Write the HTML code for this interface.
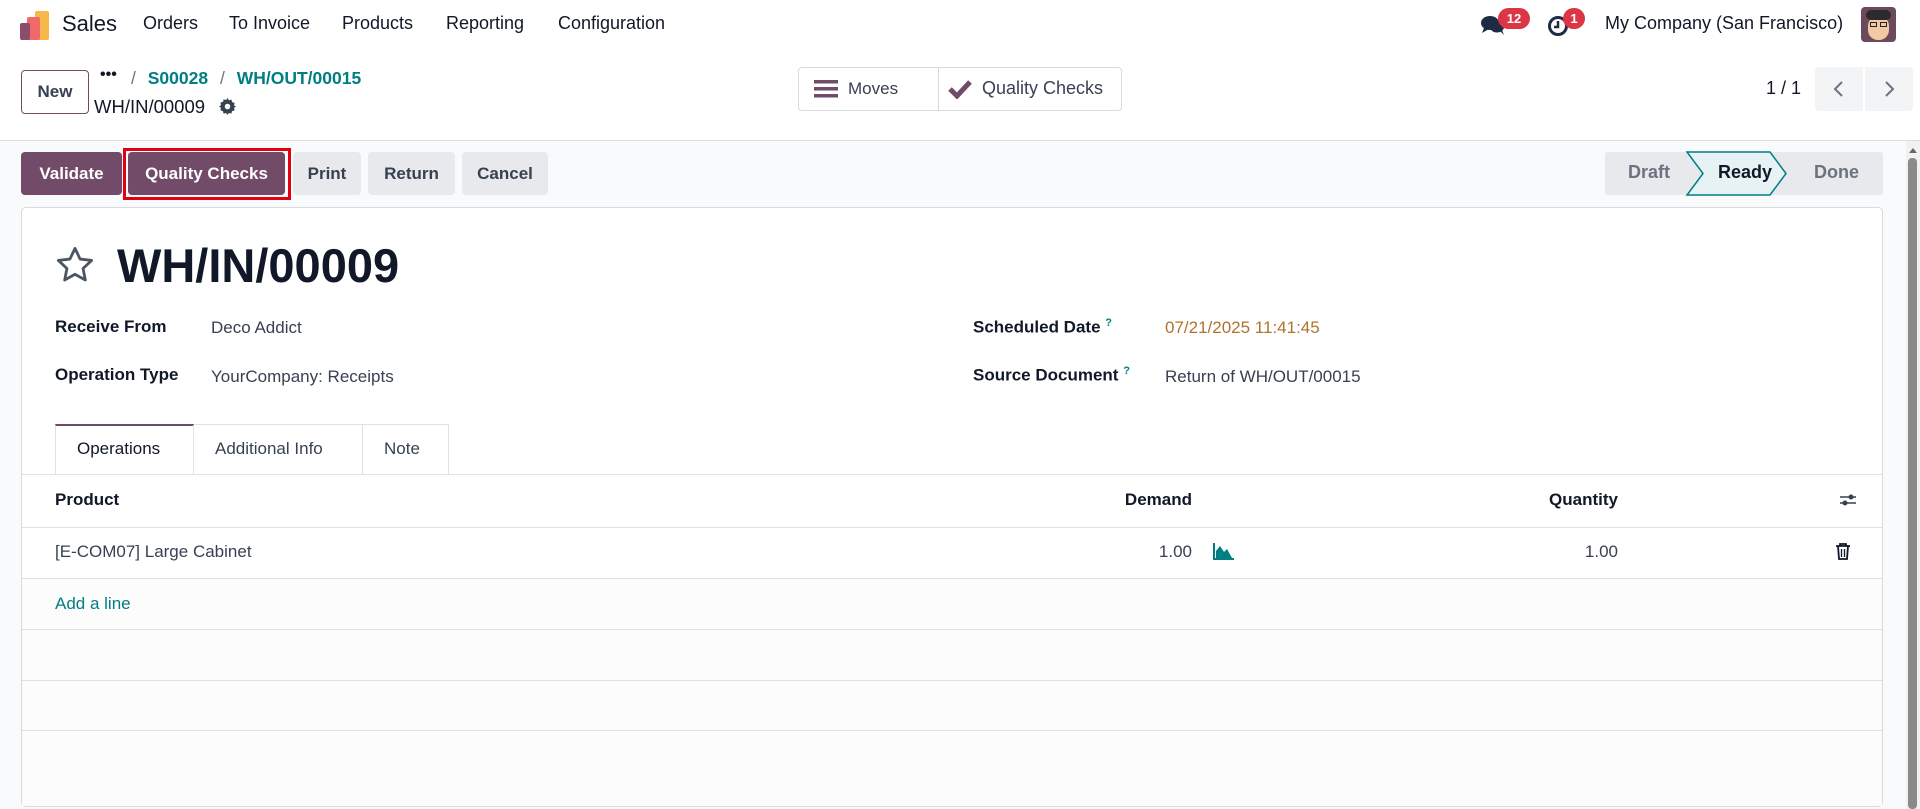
<!DOCTYPE html>
<html><head><meta charset="utf-8"><style>
*{box-sizing:border-box;margin:0;padding:0}
body{width:1920px;height:809px;overflow:hidden;background:#f9fafb;font-family:"Liberation Sans",sans-serif;color:#374151;font-size:17px;position:relative}
.a{position:absolute;white-space:nowrap}
.top{position:absolute;left:0;top:0;width:1920px;height:141px;background:#fff;border-bottom:1px solid #d8dadd}
.nav{font-size:18px;color:#111827;top:13px}
.btn{position:absolute;height:43px;border-radius:4px;font-weight:bold;font-size:17px;display:flex;align-items:center;justify-content:center}
.sec{background:#e7e9ed;color:#374151}
.pri{background:#714b67;color:#fff}
.teal{color:#017e84}
.lbl{font-weight:bold;color:#111827}
.hl{position:absolute;left:22px;width:1860px;height:1px;background:#dee2e6}
</style></head><body>
<div class="top"></div>
<div class="a" style="left:35px;top:11px;width:14px;height:29px;background:#f7b84b;border-radius:2px"></div>
<div class="a" style="left:27px;top:17px;width:13px;height:23px;background:#f06a6a;border-radius:2px"></div>
<div class="a" style="left:20px;top:23px;width:10px;height:17px;background:#8b4d6c;border-radius:2px"></div>
<div class="a nav" style="left:62px;top:11px;font-size:22px">Sales</div>
<div class="a nav" style="left:143px">Orders</div>
<div class="a nav" style="left:229px">To Invoice</div>
<div class="a nav" style="left:342px">Products</div>
<div class="a nav" style="left:446px">Reporting</div>
<div class="a nav" style="left:558px">Configuration</div>
<svg class="a" style="left:1480px;top:14px" width="26" height="22" viewBox="0 0 26 22"><ellipse cx="10" cy="9" rx="9" ry="7" fill="#1f2a44"/><path d="M4 14 L2 19 L9 15Z" fill="#1f2a44"/><ellipse cx="17" cy="13" rx="7" ry="5.5" fill="#1f2a44"/><path d="M20 17 L24 21 L22 16Z" fill="#1f2a44"/></svg>
<div class="a" style="left:1498px;top:8px;width:32px;height:21px;border-radius:11px;background:#dc3545;color:#fff;font-size:13px;font-weight:bold;text-align:center;line-height:21px">12</div>
<svg class="a" style="left:1547px;top:14px" width="24" height="24" viewBox="0 0 24 24"><circle cx="11" cy="12" r="8.5" fill="none" stroke="#1f2a44" stroke-width="3"/><path d="M11 7v6h-4" stroke="#1f2a44" stroke-width="2.5" fill="none"/></svg>
<div class="a" style="left:1563px;top:8px;width:22px;height:21px;border-radius:11px;background:#dc3545;color:#fff;font-size:13px;font-weight:bold;text-align:center;line-height:21px">1</div>
<div class="a" style="left:1605px;top:13px;font-size:18px;color:#111827">My Company (San Francisco)</div>
<div class="a" style="left:1861px;top:7px;width:35px;height:35px;border-radius:4px;background:#6b4a5e;overflow:hidden">
<div style="position:absolute;left:7px;top:9px;width:21px;height:24px;border-radius:10px;background:#f1c9a5"></div>
<div style="position:absolute;left:5px;top:3px;width:25px;height:10px;border-radius:6px;background:#2b2b2b"></div>
<div style="position:absolute;left:9px;top:15px;width:7px;height:5px;border:1.5px solid #222"></div>
<div style="position:absolute;left:19px;top:15px;width:7px;height:5px;border:1.5px solid #222"></div>
</div>
<div class="btn" style="left:21px;top:70px;width:68px;height:44px;border:1px solid #714b67;background:#fff;color:#374151">New</div>
<div class="a" style="left:100px;top:66px;font-weight:bold;font-size:16px;color:#111827">•••</div>
<div class="a" style="left:131px;top:68px;font-size:17.5px"><span style="color:#6b7280">/</span> <b class="teal" style="margin-left:7px">S00028</b> <span style="color:#6b7280;margin-left:7px">/</span> <b class="teal" style="margin-left:7px">WH/OUT/00015</b></div>
<div class="a" style="left:94px;top:96px;font-size:18.5px;color:#111827">WH/IN/00009</div>
<svg class="a" style="left:219px;top:98px" width="17" height="17" viewBox="0 0 16 16"><path fill="#374151" d="M8 0l1.3 2.1 2.4-.6.6 2.4 2.4.7-.6 2.4L16 8l-1.9 1.3.6 2.4-2.4.6-.7 2.4-2.4-.6L8 16l-1.3-1.9-2.4.6-.6-2.4-2.4-.7.6-2.4L0 8l1.9-1.3-.6-2.4 2.4-.6.7-2.4 2.4.6Z"/><circle cx="8" cy="8" r="2.6" fill="#fff"/></svg>
<div class="a" style="left:798px;top:67px;width:324px;height:44px;border:1px solid #d8dadd;border-radius:4px;background:#fff"></div>
<div class="a" style="left:938px;top:68px;width:1px;height:42px;background:#d8dadd"></div>
<svg class="a" style="left:814px;top:80px" width="24" height="18" viewBox="0 0 24 18"><rect y="0" width="24" height="3.5" fill="#714b67"/><rect y="7" width="24" height="3.5" fill="#714b67"/><rect y="14" width="24" height="3.5" fill="#714b67"/></svg>
<div class="a" style="left:848px;top:79px;font-size:17px;color:#374151">Moves</div>
<svg class="a" style="left:948px;top:79px" width="24" height="20" viewBox="0 0 24 20"><path d="M2 10l7 7L22 3" stroke="#714b67" stroke-width="5" fill="none"/></svg>
<div class="a" style="left:982px;top:78px;font-size:18px;color:#374151">Quality Checks</div>
<div class="a" style="left:1766px;top:78px;font-size:18px;color:#111827">1 / 1</div>
<div class="a" style="left:1815px;top:67px;width:48px;height:44px;background:#f3f4f6;border-radius:4px 0 0 4px"></div>
<div class="a" style="left:1865px;top:67px;width:48px;height:44px;background:#f3f4f6;border-radius:0 4px 4px 0"></div>
<svg class="a" style="left:1829px;top:79px" width="20" height="20" viewBox="0 0 20 20"><path d="M13 3L6 10l7 7" stroke="#6b7280" stroke-width="2" fill="none"/></svg>
<svg class="a" style="left:1879px;top:79px" width="20" height="20" viewBox="0 0 20 20"><path d="M7 3l7 7-7 7" stroke="#6b7280" stroke-width="2" fill="none"/></svg>
<div class="btn pri" style="left:21px;top:152px;width:101px">Validate</div>
<div class="a" style="left:123px;top:148px;width:168px;height:52px;border:3px solid #e3000f"></div>
<div class="btn pri" style="left:128px;top:152px;width:157px">Quality Checks</div>
<div class="btn sec" style="left:293px;top:152px;width:68px">Print</div>
<div class="btn sec" style="left:368px;top:152px;width:87px">Return</div>
<div class="btn sec" style="left:462px;top:152px;width:86px">Cancel</div>
<svg class="a" style="left:1605px;top:151px" width="279" height="45" viewBox="0 0 279 45"><rect x="0" y="1" width="278" height="43" fill="#e7e9ed" rx="3"/><path d="M82 1H165L181 22.5L165 44H82L98 22.5Z" fill="#e6f2f3" stroke="#017e84" stroke-width="1.5"/></svg>
<div class="a" style="left:1628px;top:162px;font-weight:bold;color:#6b7280;font-size:18px">Draft</div>
<div class="a" style="left:1718px;top:162px;font-weight:bold;color:#111827;font-size:18px">Ready</div>
<div class="a" style="left:1814px;top:162px;font-weight:bold;color:#6b7280;font-size:18px">Done</div>
<div class="a" style="left:1906px;top:141px;width:14px;height:668px;background:#f1f1f1"></div>
<div class="a" style="left:1908px;top:158px;width:9px;height:651px;background:#8a8a8a;border-radius:4px"></div>
<svg class="a" style="left:1908px;top:146px" width="10" height="8"><path d="M1 7L5 2L9 7Z" fill="#666"/></svg>
<div class="a" style="left:21px;top:207px;width:1862px;height:600px;background:#fff;border:1px solid #d8dadd;border-radius:5px"></div>
<svg class="a" style="left:54px;top:244px" width="42" height="42" viewBox="0 0 24 24"><path d="M12 2.5l2.9 6.1 6.6.8-4.9 4.6 1.3 6.6L12 17.3l-5.9 3.3 1.3-6.6-4.9-4.6 6.6-.8Z" fill="none" stroke="#4b5563" stroke-width="1.6" stroke-linejoin="round"/></svg>
<div class="a" style="left:117px;top:238px;font-size:47px;font-weight:bold;color:#111827">WH/IN/00009</div>
<div class="a lbl" style="left:55px;top:317px">Receive From</div>
<div class="a" style="left:211px;top:318px">Deco Addict</div>
<div class="a lbl" style="left:55px;top:365px">Operation Type</div>
<div class="a" style="left:211px;top:367px">YourCompany: Receipts</div>
<div class="a lbl" style="left:973px;top:317px">Scheduled Date <sup class="teal" style="font-size:11px">?</sup></div>
<div class="a" style="left:1165px;top:318px;color:#b0722e">07/21/2025 11:41:45</div>
<div class="a lbl" style="left:973px;top:365px">Source Document <sup class="teal" style="font-size:11px">?</sup></div>
<div class="a" style="left:1165px;top:367px">Return of WH/OUT/00015</div>
<div class="a" style="left:55px;top:424px;width:394px;height:50px;border:1px solid #dee2e6;border-bottom:none"></div>
<div class="a" style="left:55px;top:424px;width:139px;height:51px;border:1px solid #dee2e6;border-top:2px solid #714b67;border-bottom:none;background:#fff"></div>
<div class="a" style="left:193px;top:425px;width:1px;height:49px;background:#dee2e6"></div>
<div class="a" style="left:362px;top:425px;width:1px;height:49px;background:#dee2e6"></div>
<div class="a" style="left:77px;top:439px;color:#111827">Operations</div>
<div class="a" style="left:215px;top:439px">Additional Info</div>
<div class="a" style="left:384px;top:439px">Note</div>
<div class="hl" style="top:474px"></div>
<div class="a lbl" style="left:55px;top:490px">Product</div>
<div class="a lbl" style="left:1120px;top:490px;width:72px;text-align:right">Demand</div>
<div class="a lbl" style="left:1518px;top:490px;width:100px;text-align:right">Quantity</div>
<svg class="a" style="left:1838px;top:490px" width="20" height="20" viewBox="0 0 20 20"><path d="M2 7h16M2 13h16" stroke="#374151" stroke-width="1.6"/><circle cx="13" cy="7" r="2.5" fill="#374151"/><circle cx="7" cy="13" r="2.5" fill="#374151"/></svg>
<div class="hl" style="top:527px"></div>
<div class="a" style="left:55px;top:542px">[E-COM07] Large Cabinet</div>
<div class="a" style="left:1120px;top:542px;width:72px;text-align:right">1.00</div>
<svg class="a" style="left:1213px;top:542px" width="22" height="18" viewBox="0 0 22 18"><path d="M1 1V17H21" stroke="#017e84" stroke-width="2" fill="none"/><path d="M3 16V9L7 4L11 10L14 7L19 16Z" fill="#017e84"/></svg>
<div class="a" style="left:1518px;top:542px;width:100px;text-align:right">1.00</div>
<svg class="a" style="left:1834px;top:542px" width="18" height="19" viewBox="0 0 18 19"><path d="M2 4h14M6 4V2h6v2M4 4l1 13h8l1-13" stroke="#111827" stroke-width="1.8" fill="none"/><path d="M7.5 7v8M10.5 7v8" stroke="#111827" stroke-width="1.3"/></svg>
<div class="hl" style="top:578px"></div>
<div class="a" style="left:22px;top:579px;width:1860px;height:227px;background:#fcfcfd"></div>
<div class="a teal" style="left:55px;top:594px">Add a line</div>
<div class="hl" style="top:629px"></div>
<div class="hl" style="top:680px"></div>
<div class="hl" style="top:730px"></div>
</body></html>
